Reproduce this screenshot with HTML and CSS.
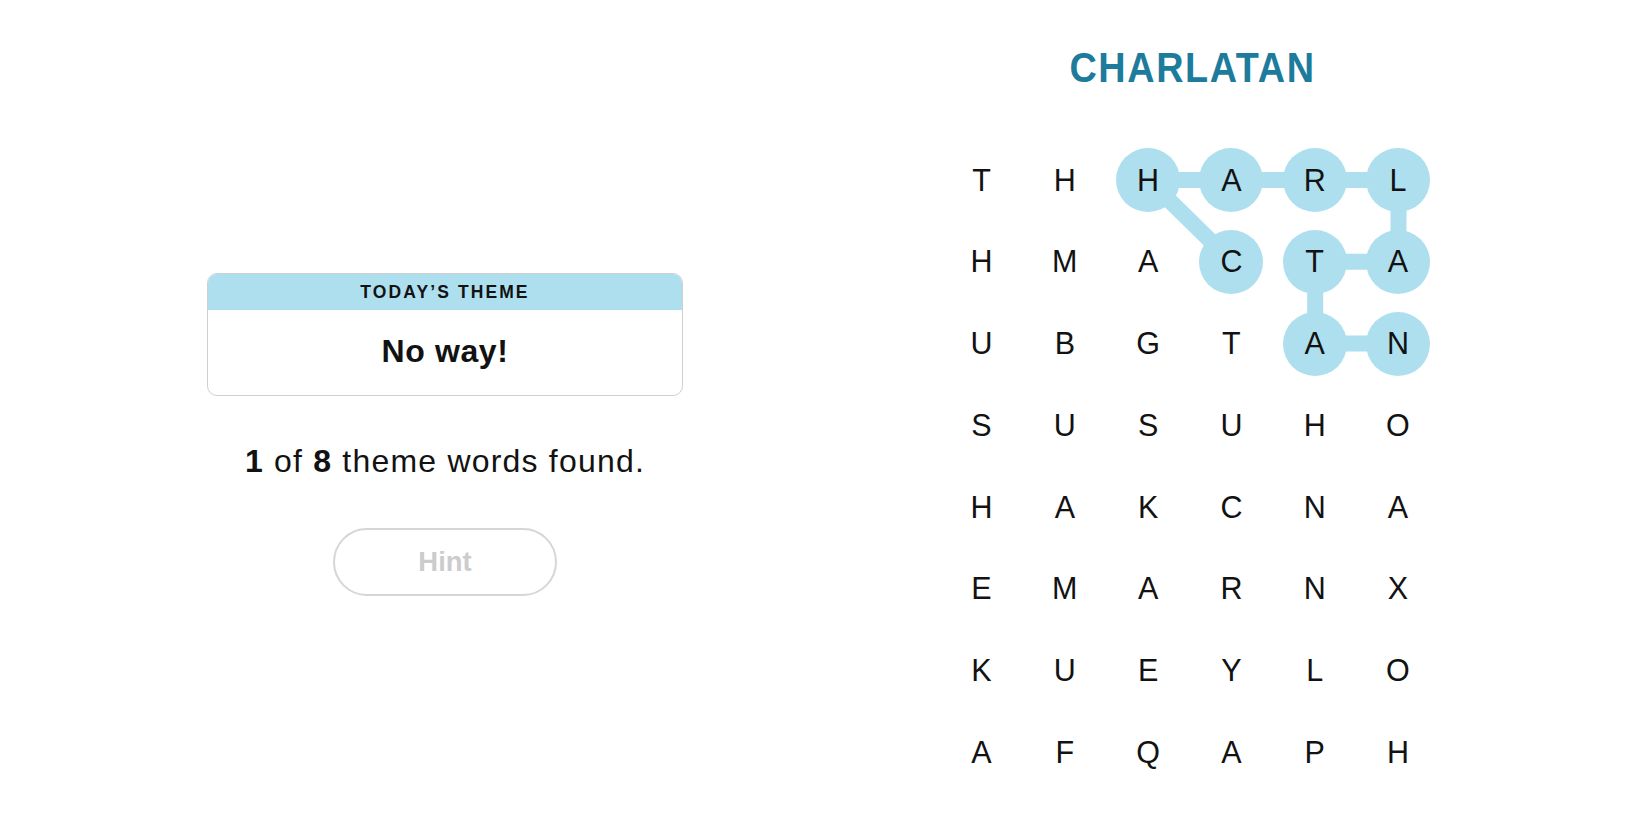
FILE: index.html
```html
<!DOCTYPE html>
<html lang="en">
<head>
<meta charset="utf-8">
<title>Strands</title>
<link rel="stylesheet" href="styles.css">
</head>
<body>
<main class="page">
  <section class="side">
    <div class="theme-card">
      <div class="theme-head">TODAY’S THEME</div>
      <div class="theme-body">No way!</div>
    </div>
    <p class="progress"><b>1</b> of <b>8</b> theme words found.</p>
    <button class="hint" type="button">Hint</button>
  </section>
  <section class="play">
    <h1 class="word">CHARLATAN</h1>
    <div class="board">
      <svg class="links" width="481" height="637" viewBox="0 0 481 637" aria-hidden="true">
        <g stroke="#aedfee" stroke-width="16" stroke-linecap="round" fill="none">
          <line x1="281.9" y1="113.8" x2="198.6" y2="32"/>
          <line x1="198.6" y1="32" x2="448.5" y2="32"/>
          <line x1="448.5" y1="32" x2="448.5" y2="113.8"/>
          <line x1="448.5" y1="113.8" x2="365.2" y2="113.8"/>
          <line x1="365.2" y1="113.8" x2="365.2" y2="195.6"/>
          <line x1="365.2" y1="195.6" x2="448.5" y2="195.6"/>
        </g>
      </svg>
      <div class="grid">
        <span class="cell">T</span><span class="cell">H</span><span class="cell on">H</span><span class="cell on">A</span><span class="cell on">R</span><span class="cell on">L</span>
        <span class="cell">H</span><span class="cell">M</span><span class="cell">A</span><span class="cell on">C</span><span class="cell on">T</span><span class="cell on">A</span>
        <span class="cell">U</span><span class="cell">B</span><span class="cell">G</span><span class="cell">T</span><span class="cell on">A</span><span class="cell on">N</span>
        <span class="cell">S</span><span class="cell">U</span><span class="cell">S</span><span class="cell">U</span><span class="cell">H</span><span class="cell">O</span>
        <span class="cell">H</span><span class="cell">A</span><span class="cell">K</span><span class="cell">C</span><span class="cell">N</span><span class="cell">A</span>
        <span class="cell">E</span><span class="cell">M</span><span class="cell">A</span><span class="cell">R</span><span class="cell">N</span><span class="cell">X</span>
        <span class="cell">K</span><span class="cell">U</span><span class="cell">E</span><span class="cell">Y</span><span class="cell">L</span><span class="cell">O</span>
        <span class="cell">A</span><span class="cell">F</span><span class="cell">Q</span><span class="cell">A</span><span class="cell">P</span><span class="cell">H</span>
      </div>
    </div>
  </section>
</main>
</body>
</html>
```

FILE: styles.css
```css
* { box-sizing: border-box; }

html, body {
  margin: 0;
  padding: 0;
  background: #ffffff;
  color: #121212;
  font-family: "Liberation Sans", Arial, sans-serif;
}

.page {
  display: flex;
  width: 1650px;
  height: 825px;
  overflow: hidden;
}

.side {
  width: 890px;
  display: flex;
  flex-direction: column;
  align-items: center;
  padding-top: 273px;
}

.theme-card {
  width: 476px;
  height: 123px;
  border: 1px solid #cfcfcf;
  border-radius: 10px;
  overflow: hidden;
  display: flex;
  flex-direction: column;
}

.theme-head {
  height: 36px;
  background: #aedfee;
  display: flex;
  align-items: center;
  justify-content: center;
  font-size: 17.5px;
  font-weight: 700;
  letter-spacing: 2.1px;
  color: #121212;
  padding-top: 1px;
}

.theme-body {
  flex: 1;
  display: flex;
  align-items: center;
  justify-content: center;
  font-size: 32px;
  font-weight: 700;
  letter-spacing: 0.6px;
  color: #121212;
  padding-bottom: 2px;
}

.progress {
  margin: 45px 0 0;
  font-size: 32px;
  line-height: 40px;
  letter-spacing: 1.2px;
  color: #121212;
}

.progress b { font-weight: 700; }

.hint {
  margin-top: 47px;
  width: 224px;
  height: 68px;
  border: 2px solid #d6d6d6;
  border-radius: 34px;
  background: #ffffff;
  font-family: "Liberation Sans", Arial, sans-serif;
  font-size: 27.5px;
  font-weight: 700;
  color: #cccccc;
  padding: 0;
}

.play {
  width: 600px;
  display: flex;
  flex-direction: column;
  align-items: center;
}

.word {
  margin: 43px 0 0;
  height: 50px;
  line-height: 50px;
  font-family: "Liberation Sans", Arial, sans-serif;
  font-size: 42px;
  font-weight: 700;
  letter-spacing: 1.8px;
  color: #1d7b9c;
  transform: scaleX(0.9);
  padding-left: 6px;
}

.board {
  position: relative;
  margin-top: 55px;
  width: 481px;
}

.links {
  position: absolute;
  left: 0;
  top: 0;
  z-index: 0;
}

.grid {
  position: relative;
  z-index: 1;
  display: grid;
  grid-template-columns: repeat(6, 64px);
  grid-auto-rows: 64px;
  column-gap: 19.3px;
  row-gap: 17.8px;
}

.cell {
  display: flex;
  align-items: center;
  justify-content: center;
  border-radius: 50%;
  font-size: 30.5px;
  color: #121212;
}

.cell.on {
  background: #aedfee;
}
```
